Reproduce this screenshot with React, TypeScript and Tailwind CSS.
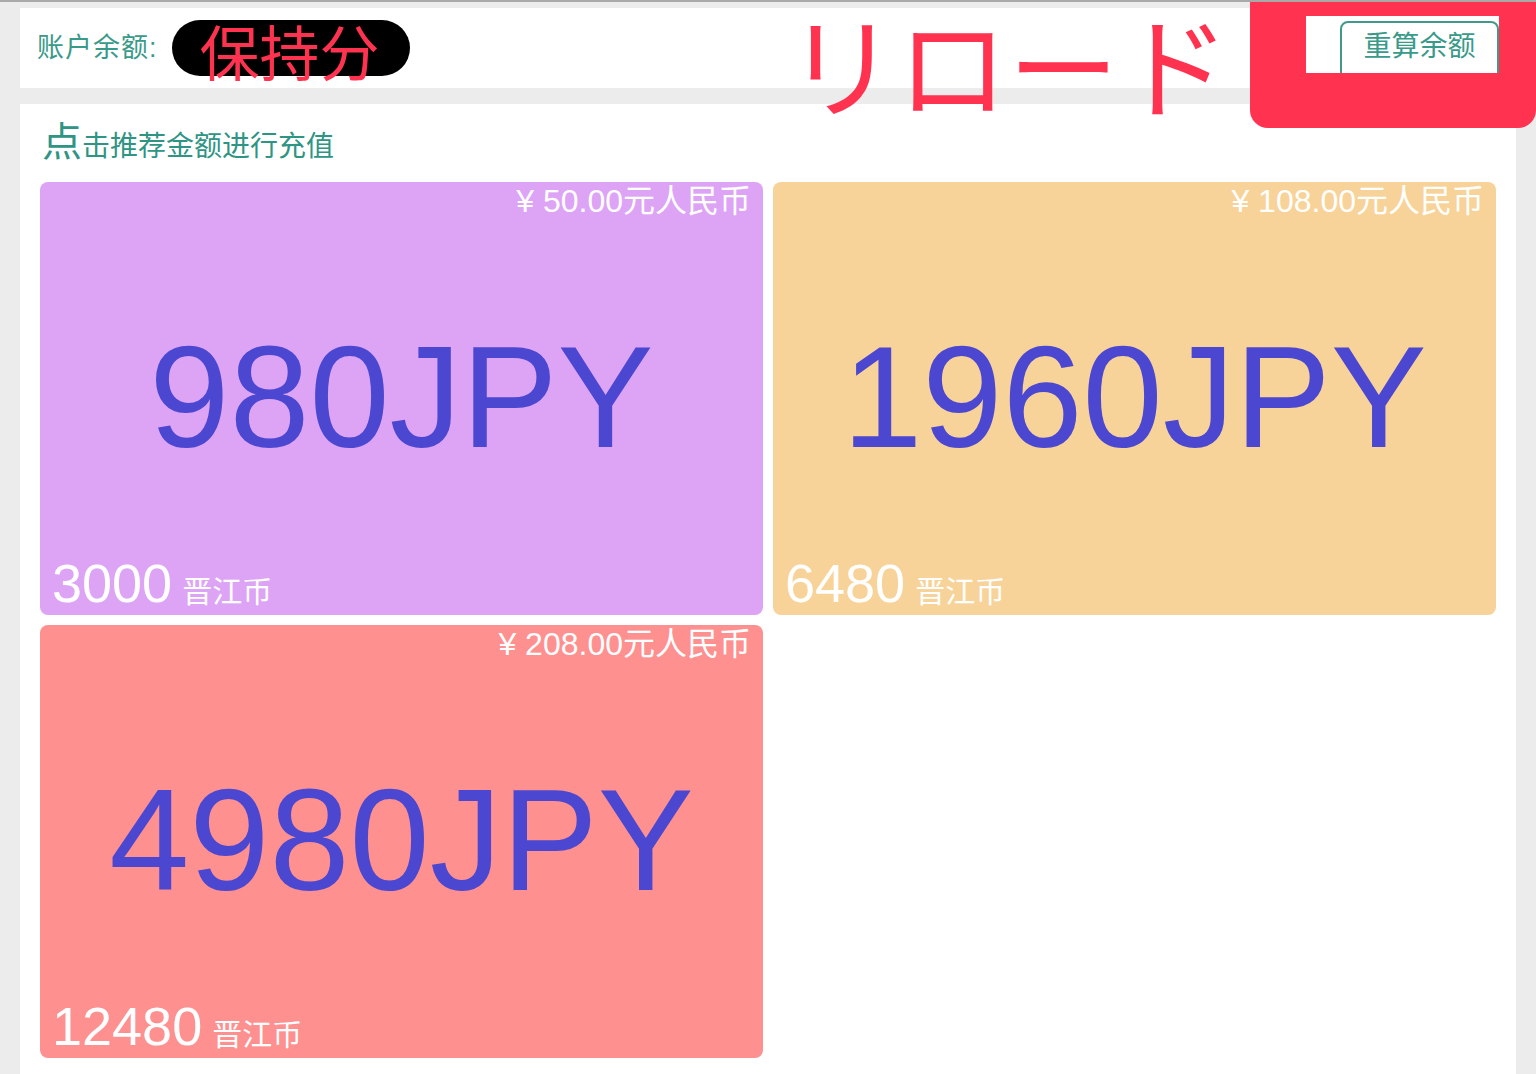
const cards = [
  { price: "¥ 50.00元人民币", label: "980JPY", coins: "3000", bg: "bg-[#dda4f5]" },
  { price: "¥ 108.00元人民币", label: "1960JPY", coins: "6480", bg: "bg-[#f8d399]" },
  { price: "¥ 208.00元人民币", label: "4980JPY", coins: "12480", bg: "bg-[#fe9090]" },
];

const sans = "font-['Liberation_Sans','Noto_Sans_CJK_SC',sans-serif]";

function RechargeCard({ price, label, coins, bg }: (typeof cards)[number]) {
  return (
    <div className={`flex h-[433px] flex-col rounded-[8px] ${bg} px-[12px] text-white`}>
      <div className="text-right text-[32px] leading-[38px]">{price}</div>
      <div className="flex flex-1 items-center justify-center pt-[21px]">
        <span className="text-[144px] leading-none text-[#4b47d1]">{label}</span>
      </div>
      <div className="flex items-baseline gap-[10px] pb-[3px] leading-none">
        <span className="text-[54px] leading-[58px]">{coins}</span>
        <span className="text-[30px]">晋江币</span>
      </div>
    </div>
  );
}

export default function App() {
  return (
    <div className={`relative min-h-screen overflow-hidden border-t-2 border-[#a9a9a9] bg-[#ececec] ${sans}`}>
      <div className="px-[20px] pt-[6px]">
        <div className="flex h-[80px] items-center bg-white pl-[17px]">
          <span className="text-[27px] tracking-[1px] text-[#3a9a8a]">账户余额:</span>
          <span className="ml-[14px] flex h-[56px] w-[238px] items-center rounded-full bg-black pl-[28px] pt-[16px] text-[60px] leading-none text-[#ff3350]">
            保持分
          </span>
        </div>
        <div className="mt-[16px] min-h-[970px] bg-white px-[20px]">
          <div className="flex items-baseline pt-[14px] pb-[14px] pl-[2px] text-[#2e9484]">
            <span className="text-[40px] leading-[48px]">点</span>
            <span className="text-[28px]">击推荐金额进行充值</span>
          </div>
          <div className="grid grid-cols-2 gap-x-[10px] gap-y-[10px]">
            {cards.map((c) => (
              <RechargeCard key={c.label} {...c} />
            ))}
          </div>
        </div>
      </div>

      <div className="absolute left-[786px] top-[-5px] font-['Noto_Sans_CJK_JP',sans-serif] text-[111px] leading-[130px] text-[#ff3350]">
        リロード
      </div>

      <div className="absolute right-0 top-[-2px] h-[128px] w-[286px] rounded-b-[18px] bg-[#ff3350]">
        <div className="ml-[56px] mt-[16px] flex h-[57px] w-[193px] items-start justify-end overflow-hidden bg-white">
          <button className="mt-[5px] h-[60px] w-[159px] rounded-[8px] border-2 border-[#3f9a8c] pb-[8px] text-[28px] text-[#3a9a8a]">
            重算余额
          </button>
        </div>
      </div>
    </div>
  );
}
